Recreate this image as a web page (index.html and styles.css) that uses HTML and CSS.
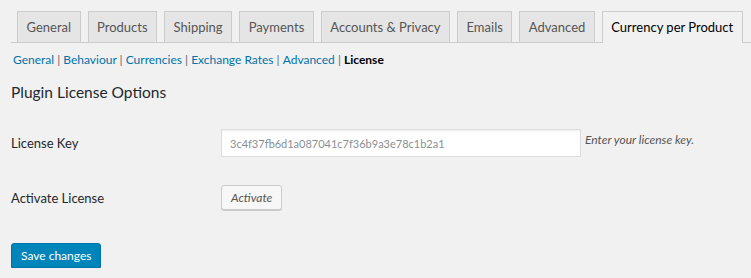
FILE: index.html
```html
<!DOCTYPE html>
<html lang="en">
<head>
<meta charset="UTF-8">
<title>Currency per Product - License</title>
<link rel="stylesheet" href="styles.css">
</head>
<body>

<div class="wrap">
  <nav class="nav-tabs">
    <a class="nav-tab" href="#">General</a>
    <a class="nav-tab" href="#">Products</a>
    <a class="nav-tab" href="#">Shipping</a>
    <a class="nav-tab" href="#">Payments</a>
    <a class="nav-tab" href="#">Accounts &amp; Privacy</a>
    <a class="nav-tab" href="#">Emails</a>
    <a class="nav-tab" href="#">Advanced</a>
    <a class="nav-tab nav-tab-active" href="#">Currency per Product</a>
  </nav>

  <ul class="subsubsub">
    <li><a href="#">General</a> | </li>
    <li><a href="#">Behaviour</a> | </li>
    <li><a href="#">Currencies</a> | </li>
    <li><a href="#">Exchange Rates</a> | </li>
    <li><a href="#">Advanced</a> | </li>
    <li><a class="current" href="#">License</a></li>
  </ul>

  <h2 class="section-title">Plugin License Options</h2>

  <div class="form-row">
    <label class="form-label" for="license_key">License Key</label>
    <div class="form-field">
      <input type="text" id="license_key" class="key-input" value="3c4f37fb6d1a087041c7f36b9a3e78c1b2a1">
      <span class="description">Enter your license key.</span>
    </div>
  </div>

  <div class="form-row form-row-activate">
    <span class="form-label">Activate License</span>
    <div class="form-field">
      <button class="button">Activate</button>
    </div>
  </div>

  <button class="button-primary">Save changes</button>
</div>

</body>
</html>
```

FILE: styles.css
```css
body {
  margin: 0;
  background-color: #f1f1f1;
  font-family: Lato, "Open Sans", sans-serif;
  font-size: 13px;
  color: #23282d;
}
.wrap {
  padding: 11px 0 0 11px;
}
.nav-tabs {
  display: flex;
  gap: 7px;
  padding-left: 6px;
  border-bottom: 1px solid #ccc;
  height: 31px;
}
.nav-tab {
  display: block;
  flex-shrink: 0;
  white-space: nowrap;
  box-sizing: border-box;
  height: 31px;
  padding: 0 8.5px;
  line-height: 30px;
  font-size: 13px;
  color: #555;
  text-decoration: none;
  background-color: #e5e5e5;
  border: 1px solid #ccc;
  border-bottom: none;
}
.nav-tab-active {
  background-color: #f1f1f1;
  color: #000;
  height: 32px;
  margin-bottom: -1px;
}
.subsubsub {
  list-style: none;
  margin: 8px 0 0 2px;
  padding: 0;
  display: flex;
  color: #666;
  font-size: 12px;
  line-height: 18px;
}
.subsubsub li {
  white-space: pre;
}
.subsubsub a {
  color: #0073aa;
  text-decoration: none;
}
.subsubsub a.current {
  color: #000;
  font-weight: bold;
}
.section-title {
  margin: 14px 0 0 0;
  font-size: 15.5px;
  font-weight: normal;
  color: #23282d;
}
.form-row {
  display: flex;
  align-items: flex-start;
  margin-top: 28px;
}
.form-label {
  width: 210px;
  font-size: 13px;
  line-height: 28px;
  color: #23282d;
}
.form-row-activate .form-label {
  line-height: 26px;
}
.form-field {
  display: flex;
  align-items: flex-start;
}
.key-input {
  box-sizing: border-box;
  width: 360px;
  height: 28px;
  padding: 0 8px;
  border: 1px solid #ddd;
  background: #fff;
  font-family: inherit;
  font-size: 11px;
  color: #8a8f94;
  box-shadow: inset 0 1px 2px rgba(0, 0, 0, 0.07);
}
.description {
  margin-left: 4px;
  padding-top: 2px;
  font-style: italic;
  font-size: 12px;
  color: #555;
  line-height: 18px;
}
.button {
  box-sizing: border-box;
  height: 25px;
  padding: 0 9px;
  border: 1px solid #ccc;
  border-radius: 3px;
  background: #f7f7f7;
  box-shadow: 0 1px 0 #ccc;
  font-family: inherit;
  font-size: 12px;
  font-style: italic;
  color: #555;
}
.button-primary {
  display: block;
  margin-top: 32px;
  box-sizing: border-box;
  height: 25px;
  padding: 0 9px;
  border: 1px solid #0073aa;
  border-radius: 3px;
  background: #0085ba;
  box-shadow: 0 1px 0 #006799;
  font-family: inherit;
  font-size: 12px;
  color: #fff;
}
```
